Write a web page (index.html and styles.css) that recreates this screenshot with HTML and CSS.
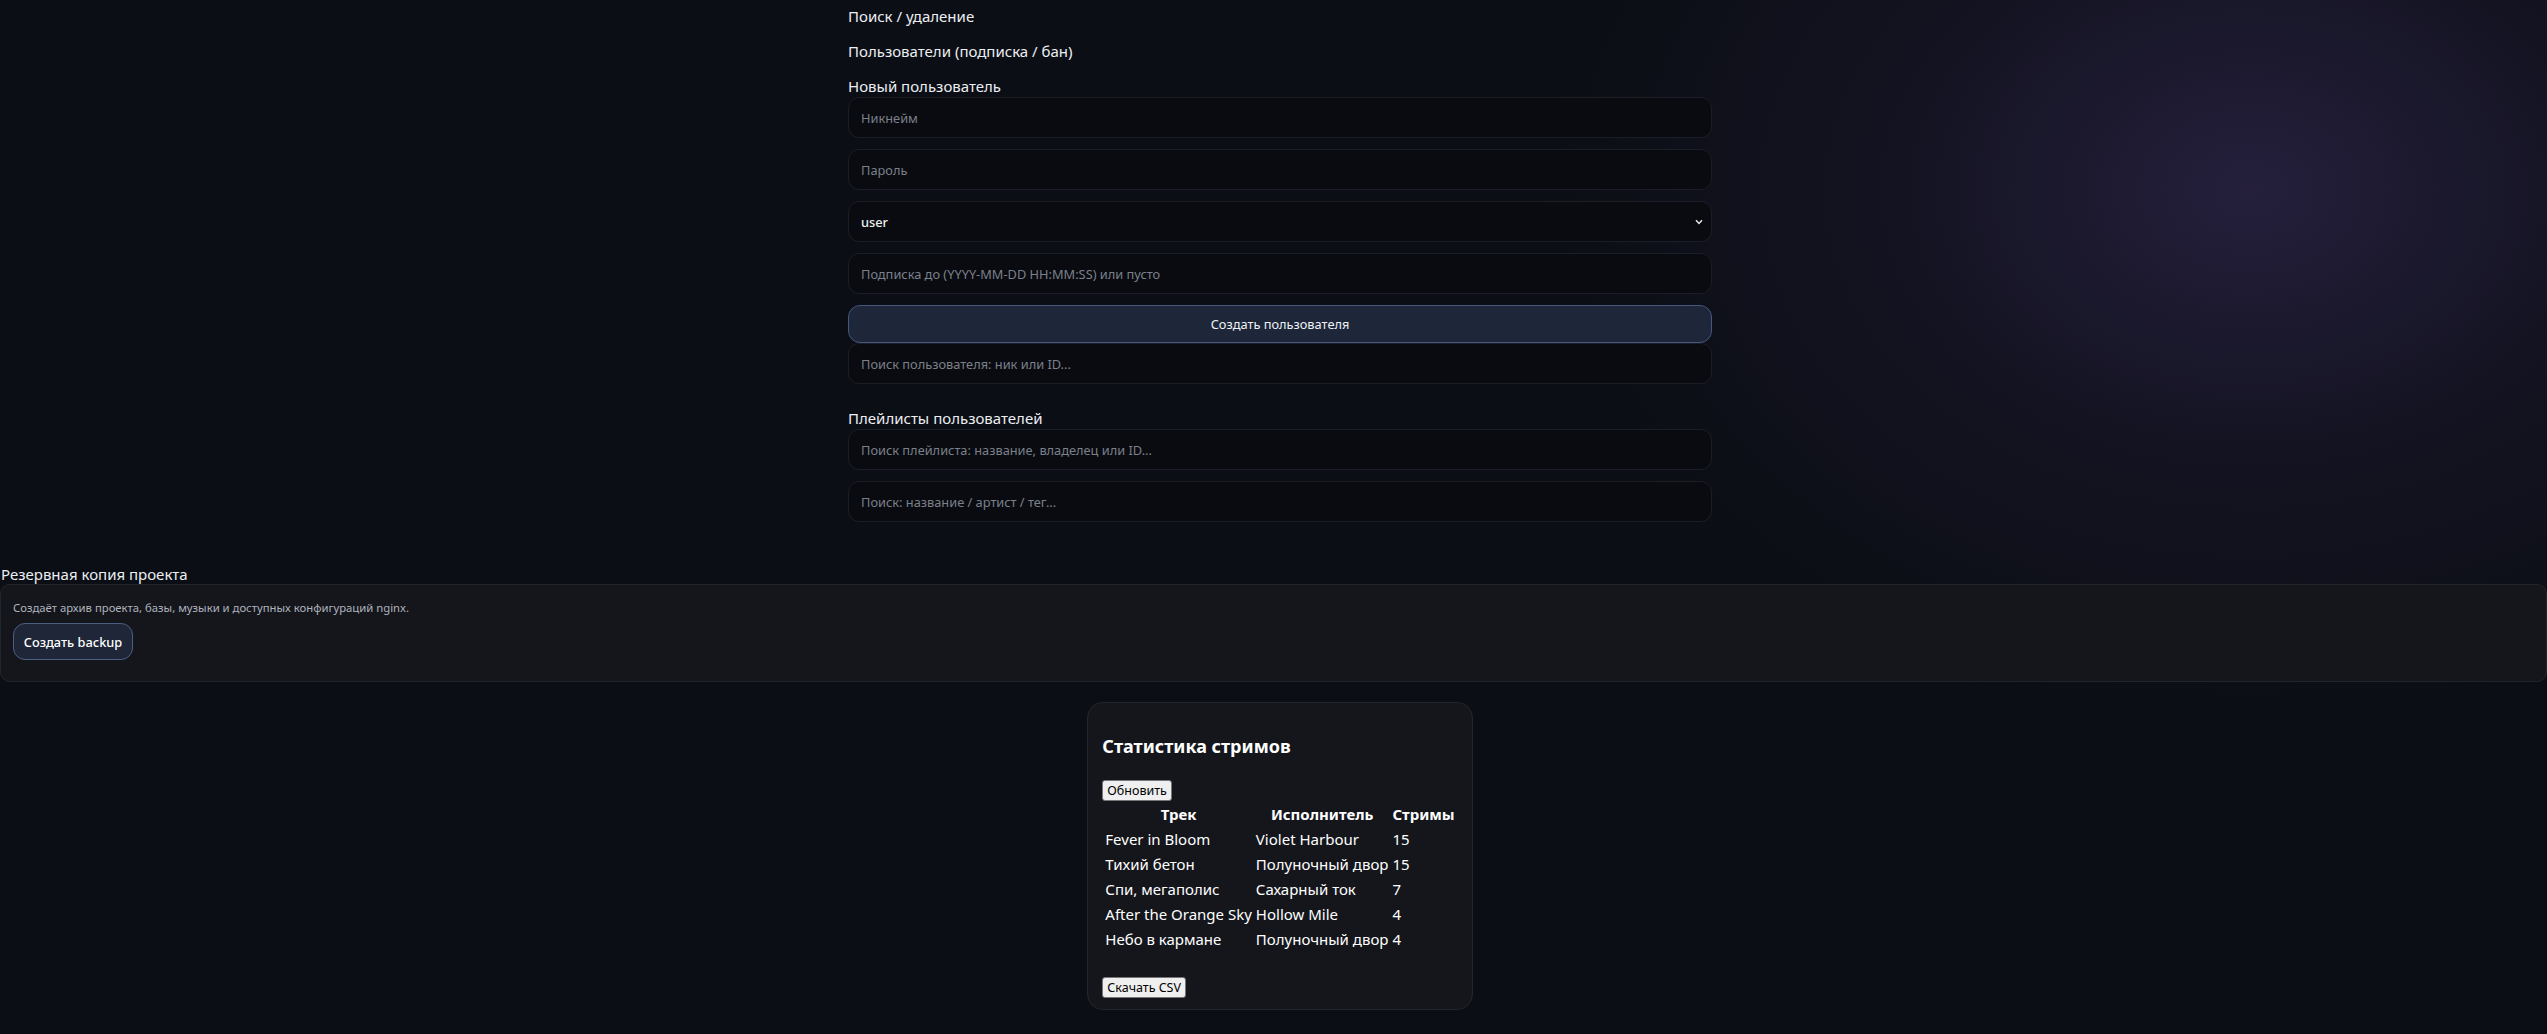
FILE: index.html
```html
<!DOCTYPE html>
<html lang="ru">
<head>
<meta charset="utf-8">
<title>Админ</title>
<link rel="stylesheet" href="styles.css">
</head>
<body>
<main class="admin">
  <div class="col">
    <div class="h">Поиск / удаление</div>
    <div class="h">Пользователи (подписка / бан)</div>
    <div class="h">Новый пользователь</div>
    <input class="field" type="text" placeholder="Никнейм">
    <input class="field" type="password" placeholder="Пароль">
    <div class="select-wrap">
      <select class="field select"><option>user</option><option>admin</option></select>
      <svg class="chev" width="8" height="6" viewBox="0 0 8 6"><path d="M1 1.2 L4 4.4 L7 1.2" fill="none" stroke="#e8e8e8" stroke-width="1.5"/></svg>
    </div>
    <input class="field" type="text" placeholder="Подписка до (YYYY-MM-DD HH:MM:SS) или пусто">
    <button class="btn-primary">Создать пользователя</button>
    <input class="field" type="text" placeholder="Поиск пользователя: ник или ID...">
    <div class="h h-playlists">Плейлисты пользователей</div>
    <input class="field" type="text" placeholder="Поиск плейлиста: название, владелец или ID...">
    <input class="field" type="text" placeholder="Поиск: название / артист / тег...">
  </div>

  <section class="backup">
    <div class="backup-title">Резервная копия проекта</div>
    <div class="backup-box">
      <p class="backup-text">Создаёт архив проекта, базы, музыки и доступных конфигураций nginx.</p>
      <button class="btn-backup">Создать backup</button>
    </div>
  </section>

  <section class="stats-wrap">
    <div class="stats">
      <h3 class="stats-title">Статистика стримов</h3>
      <button class="plain">Обновить</button>
      <table class="stats-table">
        <thead>
          <tr><th>Трек</th><th>Исполнитель</th><th>Стримы</th></tr>
        </thead>
        <tbody>
          <tr><td>Fever in Bloom</td><td>Violet Harbour</td><td>15</td></tr>
          <tr><td>Тихий бетон</td><td>Полуночный двор</td><td>15</td></tr>
          <tr><td>Спи, мегаполис</td><td>Сахарный ток</td><td>7</td></tr>
          <tr><td>After the Orange Sky</td><td>Hollow Mile</td><td>4</td></tr>
          <tr><td>Небо в кармане</td><td>Полуночный двор</td><td>4</td></tr>
        </tbody>
      </table>
      <p class="csv-row"><button class="plain">Скачать CSV</button></p>
    </div>
  </section>
</main>
</body>
</html>
```

FILE: styles.css
```css
html, body {
  margin: 0;
  padding: 0;
}

body {
  min-height: 1034px;
  font-family: "Noto Sans", "Open Sans", sans-serif;
  color: #e6e8ee;
  background:
    radial-gradient(ellipse 720px 540px at 2250px 190px, rgba(38, 32, 62, 0.95), rgba(26, 23, 44, 0.55) 50%, rgba(11, 14, 20, 0) 100%),
    #0b0e14;
}

.admin {
  display: flex;
  flex-direction: column;
}

.col {
  width: 864px;
  margin-left: calc(50% - 425.5px);
  padding-top: 5px;
  display: flex;
  flex-direction: column;
}

.h {
  font-size: 15px;
  line-height: 22px;
  color: #eceef3;
  margin-top: 13px;
}

.h:first-child {
  margin-top: 0;
}

.h-playlists {
  margin-top: 13px;
  line-height: 21px;
}

.field {
  box-sizing: border-box;
  width: 100%;
  height: 41px;
  margin: 0 0 11px 0;
  padding: 0 12px;
  background: #090b10;
  border: 1px solid #1b1e26;
  border-radius: 11px;
  color: #f0f0f0;
  font-family: "Noto Sans", sans-serif;
  font-size: 12.8px;
  outline: none;
}

.field::placeholder {
  color: #7b808b;
}

.select-wrap {
  position: relative;
}

.select {
  appearance: none;
  -webkit-appearance: none;
  font-weight: 500;
}

.chev {
  position: absolute;
  right: 9px;
  top: 18px;
}

.btn-primary {
  box-sizing: border-box;
  width: 100%;
  height: 38px;
  margin: 0;
  background: #1d2739;
  border: 1px solid #43587c;
  border-radius: 12px;
  color: #eef1f6;
  font-family: "Noto Sans", sans-serif;
  font-size: 12.8px;
}

.backup {
  margin-top: 31px;
  display: flex;
  flex-direction: column;
}

.backup-title {
  font-size: 15px;
  line-height: 20px;
  color: #eceef3;
  padding-left: 1px;
}

.backup-box {
  box-sizing: border-box;
  background: #14161c;
  border: 1px solid #22252d;
  border-radius: 10px;
  padding: 14px 12px 21px;
  display: flex;
  flex-direction: column;
  align-items: flex-start;
}

.backup-text {
  margin: 0 0 6px;
  font-size: 11.3px;
  line-height: 18px;
  color: #aeb3bd;
}

.btn-backup {
  box-sizing: border-box;
  width: 120px;
  height: 37px;
  padding: 0 6px;
  white-space: nowrap;
  background: #1e2638;
  border: 1px solid #4b5f84;
  border-radius: 12px;
  color: #ffffff;
  font-family: "Noto Sans", sans-serif;
  font-size: 12.8px;
  font-weight: 500;
}

.stats-wrap {
  margin-top: 20px;
  padding-left: 13px;
  display: flex;
  justify-content: center;
}

.stats {
  background: #14161c;
  border: 1px solid #23262e;
  border-radius: 16px;
  padding: 12px 14px 11px;
  color: #ffffff;
}

.stats-title {
  font-size: 18px;
  line-height: 25px;
  margin: 19px 0 19px;
  font-weight: 700;
}

.plain {
  box-sizing: border-box;
  height: 21px;
  padding: 0 4px;
  font-family: "Noto Sans", sans-serif;
  font-size: 12.5px;
  color: #000000;
  background: #efefef;
  border: 1px solid #767676;
  border-radius: 3px;
}

.stats-table {
  font-size: 15px;
  line-height: 21px;
}

.stats-table th {
  font-weight: 700;
}

.stats-table td {
  text-align: left;
}

.csv-row {
  margin: 22px 0 0;
}
```
